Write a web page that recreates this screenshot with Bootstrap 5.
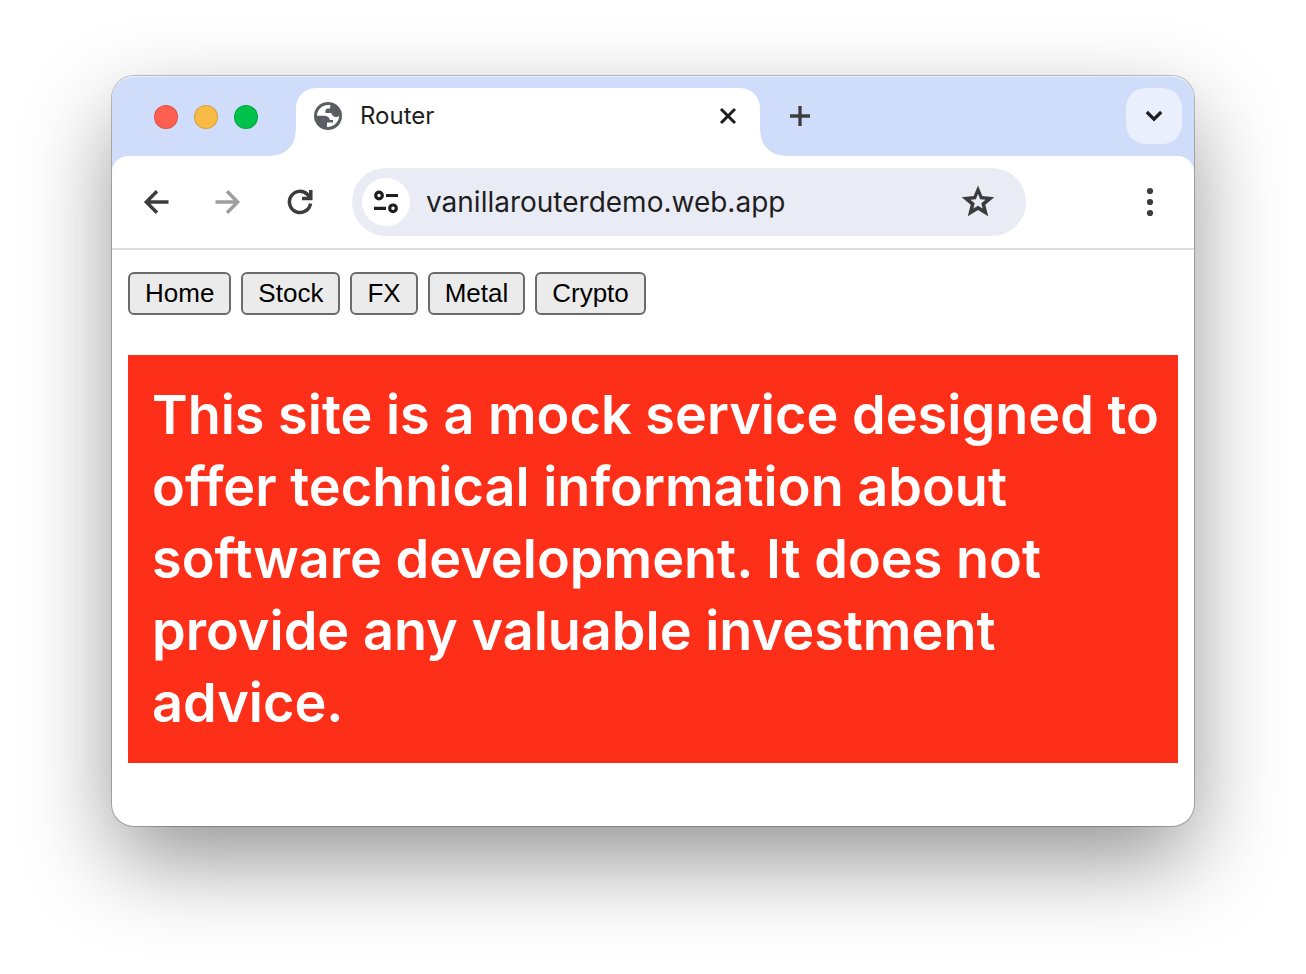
<!DOCTYPE html>
<html lang="en">
<head>
<meta charset="utf-8">
<meta name="viewport" content="width=device-width, initial-scale=1">
<title>Router</title>
<link href="https://cdn.jsdelivr.net/npm/bootstrap@5.3.0/dist/css/bootstrap.min.css" rel="stylesheet">
<style>
  body { background: #fff; padding: 76px 112px 148px; font-family: Inter, "Liberation Sans", sans-serif; color: #1f1f1f; }
  .window { border-radius: 22px; background: #fff; box-shadow: 0 0 0 1px rgba(0,0,0,.24), 0 36px 92px -4px rgba(0,0,0,.44); }
  .tab-strip { background: #cfdcfa; height: 96px; margin-bottom: -16px; padding: 12px 12px 16px 42px; border-radius: 22px 22px 0 0; box-shadow: inset 0 2px 0 -1px rgba(255,255,255,.6); }
  .lights { margin-top: 17px; }
  .light { width: 24px; height: 24px; border-radius: 50%; border: 1px solid rgba(0,0,0,.14); }
  .close-light { background: #ff5f51; }
  .min-light { background: #f9bb45; }
  .max-light { background: #00c24a; }
  .browser-tab { flex: 0 1 464px; min-width: 0; height: 68px; margin-left: 38px; padding: 0 16px 12px 18px; background: #fff; border-radius: 20px 20px 0 0; }
  .browser-tab::before, .browser-tab::after { content: ""; position: absolute; bottom: 0; width: 24px; height: 24px; }
  .browser-tab::before { right: 100%; background: radial-gradient(circle at 0 0, transparent 23px, #fff 24px); }
  .browser-tab::after { left: 100%; background: radial-gradient(circle at 100% 0, transparent 23px, #fff 24px); }
  .tab-title { font-size: 24px; line-height: 32px; margin-left: 18px; }
  .icon-btn { border: 0; padding: 0; background: transparent; width: 56px; height: 56px; color: #3c3c3c; }
  .icon-btn svg { display: block; }
  .small-btn { width: 32px; height: 32px; color: #1f1f1f; }
  .mid-btn { width: 48px; height: 48px; }
  .tab-search { background: #e9effd; border-radius: 20px; color: #1f1f1f; }
  .new-tab { margin-left: 12px; }
  .toolbar { background: #fff; border-radius: 16px 16px 0 0; border-bottom: 2px solid #dcdcdc; padding: 12px 16px; }
  .address { height: 68px; background: #e9ebf5; margin-left: 8px; margin-right: 80px; padding: 0 24px 0 10px; min-width: 0; }
  .address input { font-size: 28px; line-height: 36px; color: #1f1f1f; min-width: 0; outline: 0; }
  .site-info { background: #fff; color: #1f1f1f; }
  .page-body { padding: 22px 16px 63px; }
  .site-nav { gap: 10px; }
  .nav-btn { font: 26px/31px "Liberation Sans", sans-serif; color: #000; background: #ebebeb; border: 2px solid #6b6b6b; border-radius: 6px; padding: 4px 15px; }
  .notice { background: #fe2f18; color: #fff; font-size: 54px; line-height: 72px; font-weight: 600; margin: 40px 0 0; padding: 24px 16px 24px 24px; }
</style>
</head>
<body>
<div class="window">
  <header>
    <div class="tab-strip d-flex align-items-start">
      <div class="lights d-flex gap-3">
        <span class="light close-light"></span>
        <span class="light min-light"></span>
        <span class="light max-light"></span>
      </div>
      <div class="browser-tab position-relative d-flex align-items-center">
        <svg width="28" height="28" viewBox="0 0 28 28" aria-hidden="true"><circle cx="14" cy="14" r="14" fill="#5a5d62"/><path d="M16.500 3.200C10 1.800 4.200 6 3 12.500V13.800H9.500Q15.700 14 15.800 18H19V20.500H13V24.900C19.500 25.300 25.200 20 25.200 13.500C23.500 15.800 20 15.300 18.500 13.200Q17.500 12.500 17.300 11H11.500V8.500Q11.600 6.600 14 6.500H16.300Q15.800 5 16.500 3.200Z" fill="#fff"/></svg>
        <span class="tab-title flex-grow-1 text-truncate">Router</span>
        <button class="icon-btn small-btn" type="button" aria-label="Close tab"><svg width="32" height="32" viewBox="0 0 32 32" fill="none" stroke="currentColor" stroke-width="3"><path d="M9 9 23 23M23 9 9 23"/></svg></button>
      </div>
      <button class="icon-btn new-tab" type="button" aria-label="New tab"><svg width="56" height="56" viewBox="0 0 56 56" fill="none" stroke="currentColor" stroke-width="3.300"><path d="M28 18V38M18 28H38"/></svg></button>
      <button class="icon-btn tab-search ms-auto" type="button" aria-label="Search tabs"><svg width="56" height="56" viewBox="0 0 56 56" fill="none" stroke="currentColor" stroke-width="3.200"><path d="M20.800 24 28 31.200 35.200 24"/></svg></button>
    </div>
    <div class="toolbar position-relative d-flex align-items-center gap-3">
      <button class="icon-btn" type="button" aria-label="Back"><svg width="56" height="56" viewBox="0 0 56 56" fill="none" stroke="currentColor" stroke-width="3.400"><path d="M40.500 28H19M29 17.300 18.300 28 29 38.700"/></svg></button>
      <button class="icon-btn" type="button" aria-label="Forward" disabled><svg width="56" height="56" viewBox="0 0 56 56" fill="none" stroke="#9e9e9e" stroke-width="3.400"><path d="M15.500 28H37M27 17.300 37.700 28 27 38.700"/></svg></button>
      <button class="icon-btn" type="button" aria-label="Reload"><svg width="56" height="56" viewBox="0 0 56 56" fill="none" stroke="currentColor" stroke-width="3.500"><path d="M38.500 29.500A10.600 10.600 0 1 1 35.500 20.400L38.700 23.600M38.800 16V24.500H30"/></svg></button>
      <div class="address rounded-pill d-flex align-items-center flex-grow-1">
        <button class="icon-btn mid-btn site-info rounded-circle flex-shrink-0" type="button" aria-label="Site information"><svg width="48" height="48" viewBox="0 0 48 48" fill="none" stroke="currentColor" stroke-width="3.200"><circle cx="17" cy="17.500" r="3.300"/><path d="M24 17.500H36M12 30.300H24"/><circle cx="31" cy="30.300" r="3.300"/></svg></button>
        <input class="flex-grow-1 border-0 bg-transparent p-0 ms-3" type="text" aria-label="Address" value="vanillarouterdemo.web.app">
        <button class="icon-btn mid-btn flex-shrink-0" type="button" aria-label="Bookmark"><svg width="48" height="48" viewBox="0 0 48 48" fill="currentColor" fill-rule="evenodd"><path d="M24 7.500 28.300 18.100 40.300 19.200 31.300 26.700 34.200 38.200 24 32 13.800 38.200 16.700 26.700 7.700 19.200 19.700 18.100ZM24 15.800 21.900 21.300 16.500 21.700 20.700 25.200 19.400 30.600 24 27.700 28.600 30.600 27.300 25.200 31.500 21.700 26.100 21.300Z"/></svg></button>
      </div>
      <button class="icon-btn" type="button" aria-label="Menu"><svg width="56" height="56" viewBox="0 0 56 56" fill="currentColor"><circle cx="28" cy="17" r="3.100"/><circle cx="28" cy="28" r="3.100"/><circle cx="28" cy="39" r="3.100"/></svg></button>
    </div>
  </header>
  <main class="page-body">
    <nav class="site-nav d-flex flex-wrap">
      <button class="nav-btn" type="button">Home</button>
      <button class="nav-btn" type="button">Stock</button>
      <button class="nav-btn" type="button">FX</button>
      <button class="nav-btn" type="button">Metal</button>
      <button class="nav-btn" type="button">Crypto</button>
    </nav>
    <p class="notice">This site is a mock service designed to offer technical information about software development. It does not provide any valuable investment advice.</p>
  </main>
</div>
<script src="https://cdn.jsdelivr.net/npm/bootstrap@5.3.0/dist/js/bootstrap.bundle.min.js"></script>
</body>
</html>
